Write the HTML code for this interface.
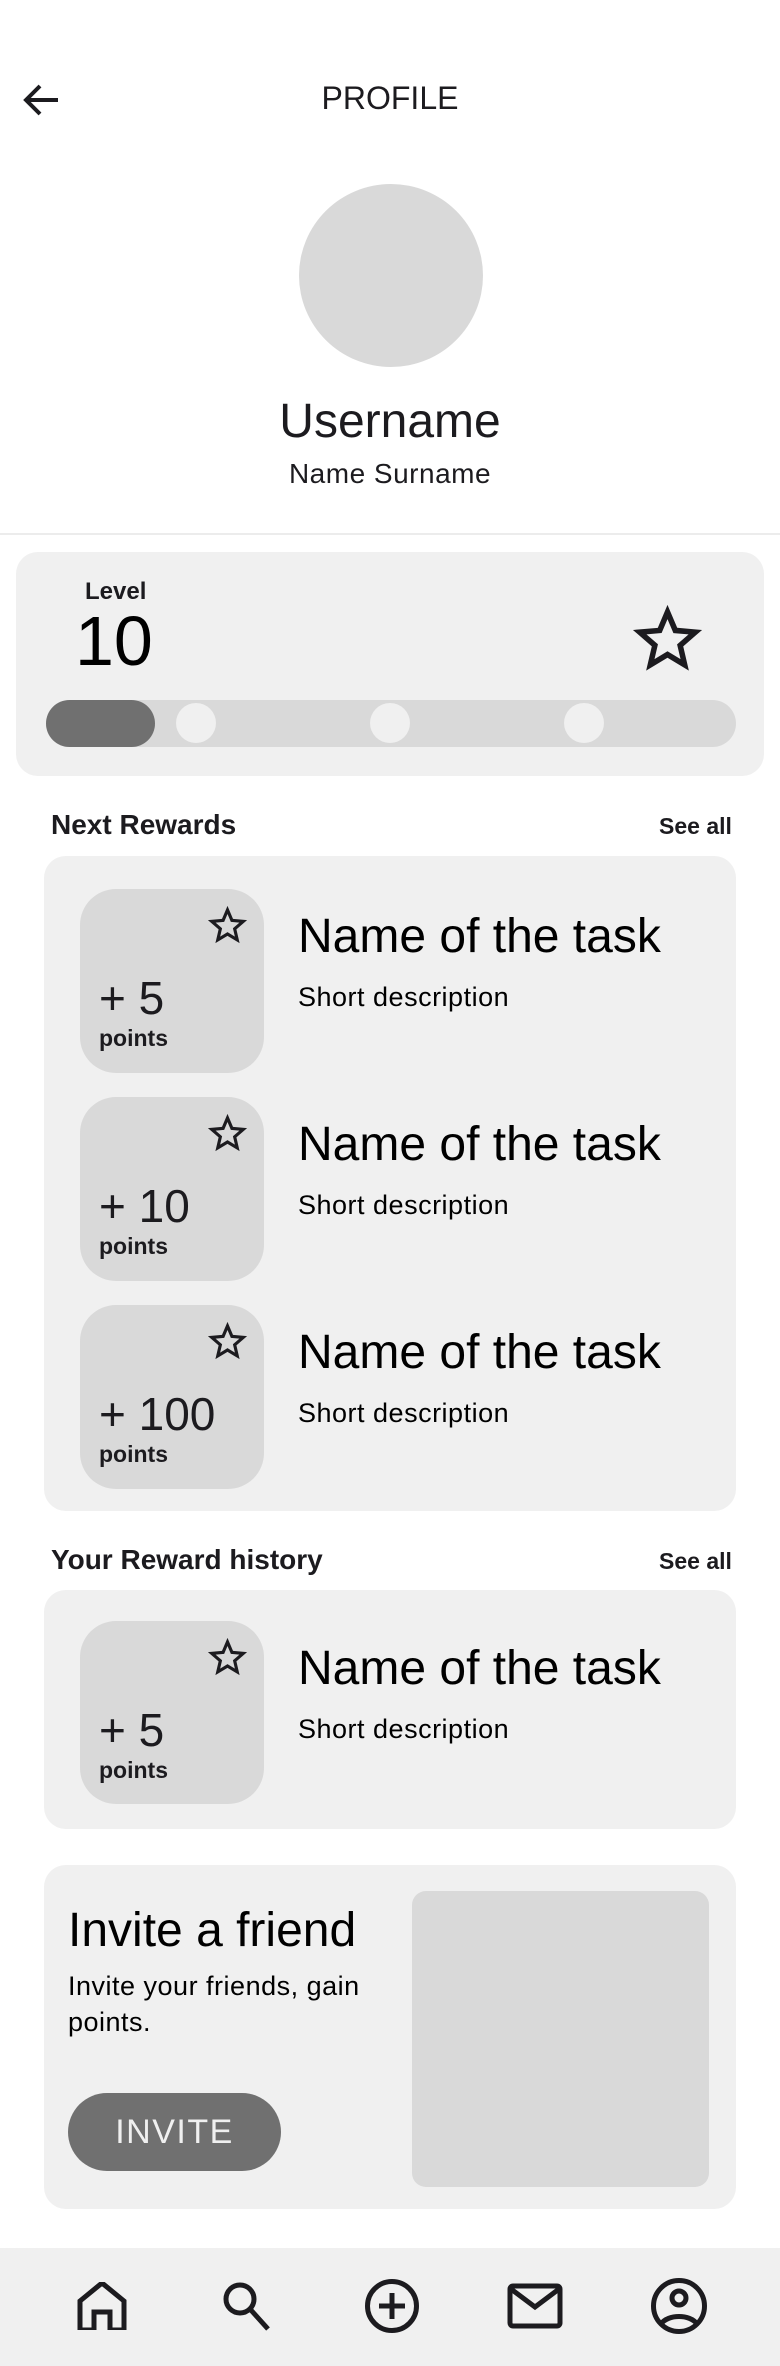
<!DOCTYPE html>
<html><head><meta charset="utf-8"><style>
*{margin:0;padding:0;box-sizing:border-box}
body{width:780px;height:2366px;background:#fff;font-family:"Liberation Sans",sans-serif;color:#1c1b1f;position:relative;overflow:hidden}
.a{position:absolute}
.t{white-space:nowrap;line-height:1}
.card{position:absolute;background:#f0f0f0;border-radius:22px}
.tile{position:absolute;left:36px;width:184px;height:184px;background:#d9d9d9;border-radius:36px}
.tile svg{position:absolute;left:124px;top:13px}
.pts{position:absolute;left:19px;top:86px;font-size:46px;line-height:1;color:#1c1b1f}
.pl{position:absolute;left:19px;top:138px;font-size:23px;font-weight:bold;line-height:1;color:#1c1b1f}
.nm{position:absolute;left:254px;font-size:48px;line-height:1;color:#000}
.sd{position:absolute;left:254px;font-size:27px;line-height:1;color:#000;letter-spacing:.5px}
</style></head><body>
<svg class="a" style="left:22px;top:82px" width="38" height="36" viewBox="0 0 38 36"><path d="M36 18H5M18 4L4 18l14 14" fill="none" stroke="#1c1b1f" stroke-width="4"/></svg>
<div class="a t" style="left:0;width:780px;text-align:center;top:82px;font-size:32px;">PROFILE</div>
<div class="a" style="left:299px;top:184px;width:184px;height:183px;border-radius:50%;background:#d9d9d9"></div>
<div class="a t" style="left:0;width:780px;text-align:center;top:398px;font-size:48px;">Username</div>
<div class="a t" style="left:0;width:780px;text-align:center;top:460px;font-size:28px;letter-spacing:.5px">Name Surname</div>
<div class="a" style="left:0;top:533px;width:780px;height:2px;background:#ececec"></div>

<div class="card" style="left:16px;top:552px;width:748px;height:224px">
 <div class="a t" style="left:69px;top:28px;font-size:24px;font-weight:bold">Level</div>
 <div class="a t" style="left:59px;top:54px;font-size:70px;color:#000">10</div>
 <svg class="a" style="left:610px;top:46px" width="83" height="83" viewBox="0 0 24 24"><path fill="#1c1b1f" d="M22 9.24l-7.19-.62L12 2 9.19 8.63 2 9.24l5.46 4.73L5.82 21 12 17.27 18.18 21l-1.63-7.03L22 9.24zM12 15.4l-3.76 2.27 1-4.28-3.32-2.88 4.38-.38L12 6.1l1.71 4.04 4.38.38-3.32 2.88 1 4.28L12 15.4z"/></svg>
 <div class="a" style="left:30px;top:148px;width:690px;height:47px;border-radius:24px;background:#d9d9d9"></div>
 <div class="a" style="left:30px;top:148px;width:109px;height:47px;border-radius:24px;background:#707070"></div>
 <div class="a" style="left:160px;top:151px;width:40px;height:40px;border-radius:50%;background:#f0f0f0"></div>
 <div class="a" style="left:354px;top:151px;width:40px;height:40px;border-radius:50%;background:#f0f0f0"></div>
 <div class="a" style="left:548px;top:151px;width:40px;height:40px;border-radius:50%;background:#f0f0f0"></div>
</div>

<div class="a t" style="left:51px;top:811px;font-size:28px;font-weight:bold">Next Rewards</div>
<div class="a t" style="left:659px;top:815px;font-size:23px;font-weight:bold">See all</div>

<div class="card" style="left:44px;top:856px;width:692px;height:655px">
 <div class="tile" style="top:33px"><svg width="47" height="47" viewBox="0 0 24 24"><path fill="#1c1b1f" d="M22 9.24l-7.19-.62L12 2 9.19 8.63 2 9.24l5.46 4.73L5.82 21 12 17.27 18.18 21l-1.63-7.03L22 9.24zM12 15.4l-3.76 2.27 1-4.28-3.32-2.88 4.38-.38L12 6.1l1.71 4.04 4.38.38-3.32 2.88 1 4.28L12 15.4z"/></svg><div class="pts">+ 5</div><div class="pl">points</div></div>
 <div class="nm t" style="top:57px">Name of the task</div>
 <div class="sd t" style="top:128px">Short description</div>
 <div class="tile" style="top:241px"><svg width="47" height="47" viewBox="0 0 24 24"><path fill="#1c1b1f" d="M22 9.24l-7.19-.62L12 2 9.19 8.63 2 9.24l5.46 4.73L5.82 21 12 17.27 18.18 21l-1.63-7.03L22 9.24zM12 15.4l-3.76 2.27 1-4.28-3.32-2.88 4.38-.38L12 6.1l1.71 4.04 4.38.38-3.32 2.88 1 4.28L12 15.4z"/></svg><div class="pts">+ 10</div><div class="pl">points</div></div>
 <div class="nm t" style="top:265px">Name of the task</div>
 <div class="sd t" style="top:336px">Short description</div>
 <div class="tile" style="top:449px"><svg width="47" height="47" viewBox="0 0 24 24"><path fill="#1c1b1f" d="M22 9.24l-7.19-.62L12 2 9.19 8.63 2 9.24l5.46 4.73L5.82 21 12 17.27 18.18 21l-1.63-7.03L22 9.24zM12 15.4l-3.76 2.27 1-4.28-3.32-2.88 4.38-.38L12 6.1l1.71 4.04 4.38.38-3.32 2.88 1 4.28L12 15.4z"/></svg><div class="pts">+ 100</div><div class="pl">points</div></div>
 <div class="nm t" style="top:473px">Name of the task</div>
 <div class="sd t" style="top:544px">Short description</div>
</div>

<div class="a t" style="left:51px;top:1546px;font-size:28px;font-weight:bold">Your Reward history</div>
<div class="a t" style="left:659px;top:1550px;font-size:23px;font-weight:bold">See all</div>

<div class="card" style="left:44px;top:1590px;width:692px;height:239px">
 <div class="tile" style="top:31px;height:183px"><svg width="47" height="47" viewBox="0 0 24 24"><path fill="#1c1b1f" d="M22 9.24l-7.19-.62L12 2 9.19 8.63 2 9.24l5.46 4.73L5.82 21 12 17.27 18.18 21l-1.63-7.03L22 9.24zM12 15.4l-3.76 2.27 1-4.28-3.32-2.88 4.38-.38L12 6.1l1.71 4.04 4.38.38-3.32 2.88 1 4.28L12 15.4z"/></svg><div class="pts">+ 5</div><div class="pl">points</div></div>
 <div class="nm t" style="top:55px">Name of the task</div>
 <div class="sd t" style="top:126px">Short description</div>
</div>

<div class="card" style="left:44px;top:1865px;width:692px;height:344px">
 <div class="a t" style="left:24px;top:42px;font-size:48px;color:#000">Invite a friend</div>
 <div class="a" style="left:24px;top:103px;font-size:27px;line-height:36px;color:#000;width:340px;letter-spacing:.5px">Invite your friends, gain points.</div>
 <div class="a" style="left:24px;top:228px;width:213px;height:78px;border-radius:39px;background:#707070;color:#f0f0f0;font-size:34px;line-height:78px;text-align:center;letter-spacing:1.5px">INVITE</div>
 <div class="a" style="left:368px;top:26px;width:297px;height:296px;border-radius:14px;background:#d9d9d9"></div>
</div>

<div class="a" style="left:0;top:2248px;width:780px;height:118px;background:#f0f0f0"></div>
<svg class="a" style="left:76px;top:2282px" width="52" height="48" viewBox="0 0 52 48"><path d="M4 46V17L26 -1 48 17V46H34V28H18V46Z" transform="translate(0,2)" fill="none" stroke="#1c1b1f" stroke-width="5" stroke-linejoin="miter"/></svg>
<svg class="a" style="left:220px;top:2280px" width="52" height="52" viewBox="0 0 52 52"><circle cx="20" cy="19" r="14" fill="none" stroke="#1c1b1f" stroke-width="5"/><path d="M30 29L48 49" stroke="#1c1b1f" stroke-width="5"/></svg>
<svg class="a" style="left:364px;top:2278px" width="56" height="56" viewBox="0 0 56 56"><circle cx="28" cy="28" r="24.5" fill="none" stroke="#1c1b1f" stroke-width="5"/><path d="M28 15V41M15 28H41" stroke="#1c1b1f" stroke-width="5"/></svg>
<svg class="a" style="left:507px;top:2283px" width="56" height="46" viewBox="0 0 56 46"><rect x="3" y="3" width="50" height="40" rx="3" fill="none" stroke="#1c1b1f" stroke-width="5"/><path d="M4 6L28 24 52 6" fill="none" stroke="#1c1b1f" stroke-width="5"/></svg>
<svg class="a" style="left:650px;top:2277px" width="58" height="58" viewBox="0 0 58 58"><circle cx="29" cy="29" r="25.5" fill="none" stroke="#1c1b1f" stroke-width="5"/><circle cx="29" cy="21" r="7" fill="none" stroke="#1c1b1f" stroke-width="5"/><path d="M11 47C18 37 40 37 47 47" fill="none" stroke="#1c1b1f" stroke-width="5"/></svg>
</body></html>
